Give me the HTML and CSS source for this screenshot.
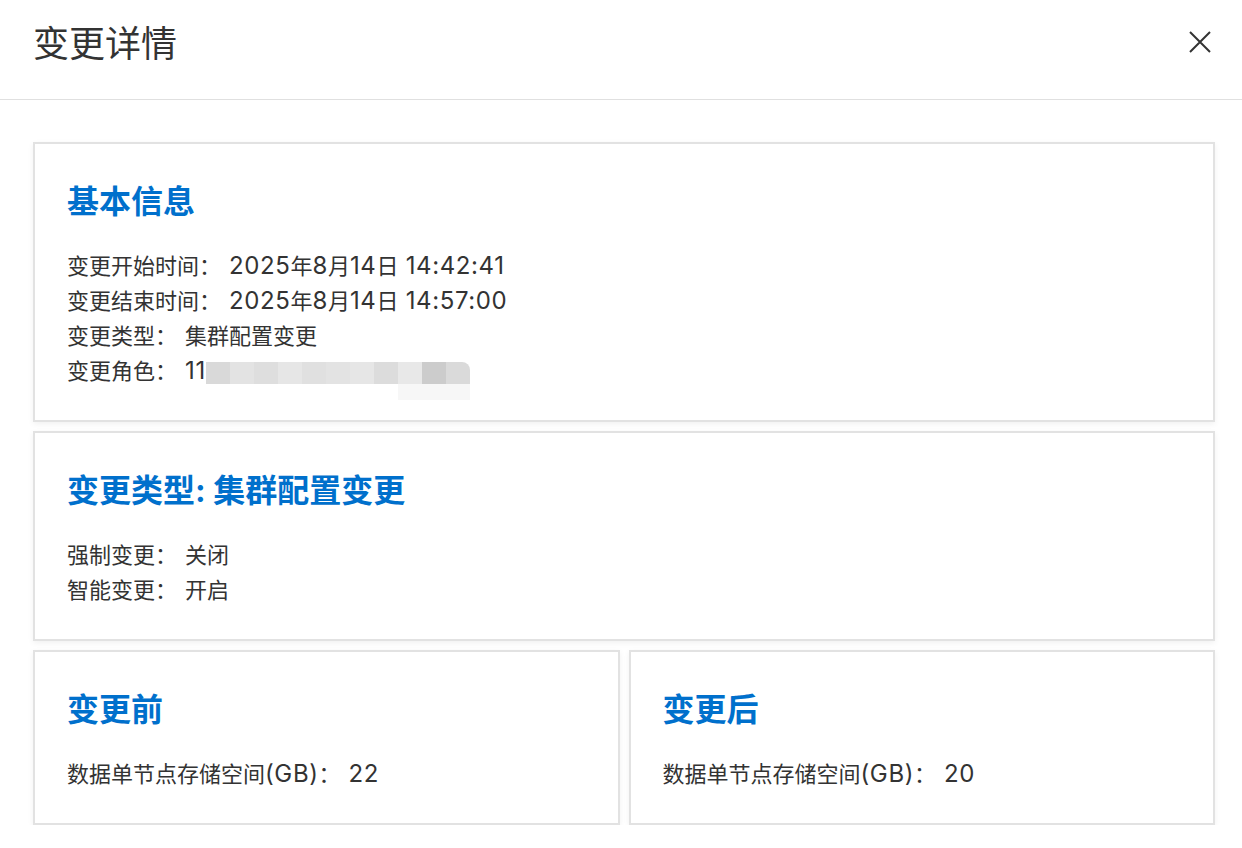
FILE: index.html
```html
<!DOCTYPE html>
<html lang="zh-CN">

<head>
    <meta charset="UTF-8">
    <meta name="viewport" content="width=device-width, initial-scale=1.0">
    <title>变更详情</title>
    <link rel="stylesheet" href="styles.css">
</head>

<body>
    <div class="drawer">
        <div class="drawer-header">
            <h1 class="drawer-title">变更详情</h1>
            <button class="close-btn" type="button" aria-label="关闭">
                <svg width="22" height="22" viewBox="0 0 22 22">
                    <path d="M1 1 L21 21 M21 1 L1 21" stroke="#333" stroke-width="2" fill="none" />
                </svg>
            </button>
        </div>

        <div class="drawer-body">
            <div class="card">
                <h2>基本信息</h2>
                <div class="info">
                    <p>变更开始时间：<span class="val"><span class="num">2025</span>年<span class="num">8</span>月<span class="num">14</span>日<span class="num"> 14:42:41</span></span></p>
                    <p>变更结束时间：<span class="val"><span class="num">2025</span>年<span class="num">8</span>月<span class="num">14</span>日<span class="num"> 14:57:00</span></span></p>
                    <p>变更类型：<span class="val">集群配置变更</span></p>
                    <p>变更角色：<span class="val num">11</span><span class="masked">
                            <i style="background:#d9d9d9"></i><i style="background:#e3e3e3"></i><i style="background:#dedede"></i><i style="background:#e6e6e6"></i><i style="background:#e0e0e0"></i><i style="background:#e3e3e3"></i><i style="background:#e6e6e6"></i><i style="background:#dcdcdc"></i><i style="background:#e8e8e8"></i><i style="background:#cccccc"></i><i style="background:#dadada"></i>
                        </span></p>
                </div>
            </div>

            <div class="card">
                <h2>变更类型: 集群配置变更</h2>
                <div class="info">
                    <p>强制变更：<span class="val">关闭</span></p>
                    <p>智能变更：<span class="val">开启</span></p>
                </div>
            </div>

            <div class="compare">
                <div class="card">
                    <h2>变更前</h2>
                    <div class="info">
                        <p>数据单节点存储空间<span class="num">(GB)</span>：<span class="val num">22</span></p>
                    </div>
                </div>
                <div class="card">
                    <h2>变更后</h2>
                    <div class="info">
                        <p>数据单节点存储空间<span class="num">(GB)</span>：<span class="val num">20</span></p>
                    </div>
                </div>
            </div>
        </div>
    </div>
</body>

</html>
```

FILE: styles.css
```css
body {
    margin: 0;
    background-color: #ffffff;
    font-family: "Inter", "Noto Sans CJK SC", sans-serif;
    color: #333333;
}

.drawer-header {
    display: flex;
    justify-content: space-between;
    align-items: flex-start;
    height: 100px;
    box-sizing: border-box;
    padding: 23px 31px 0 33px;
    border-bottom: 1px solid #e0e0e0;
}

.drawer-title {
    margin: 0;
    font-size: 36px;
    line-height: 42px;
    font-weight: normal;
    color: #333333;
}

.close-btn {
    margin-top: 8px;
    padding: 0;
    border: none;
    background: none;
    cursor: pointer;
    line-height: 0;
}

.drawer-body {
    display: flex;
    flex-direction: column;
    gap: 9px;
    padding: 42px 27px 0 33px;
}

.card {
    background-color: #ffffff;
    border: 2px solid #e2e2e2;
    box-shadow: 0 2px 6px rgba(0, 0, 0, 0.06);
    padding: 34px 32px 31px;
}

.card h2 {
    margin: 0 0 23px;
    font-size: 32px;
    line-height: 48px;
    font-weight: bold;
    color: #0070cc;
}

.info p {
    margin: 0;
    font-size: 22px;
    line-height: 35px;
    color: #333333;
}

/* 冒号后留一点空 */
.val {
    margin-left: 8px;
}

/* 数字比中文略大一点 */
.num {
    font-size: 24px;
    line-height: 0;
    letter-spacing: 0.6px;
}

.masked {
    position: relative;
    display: inline-flex;
    vertical-align: -5px;
    height: 22px;
}

.masked i {
    display: inline-block;
    width: 24px;
    height: 22px;
}

.masked i:last-child {
    border-top-right-radius: 8px;
}

.masked::after {
    content: "";
    position: absolute;
    right: 0;
    top: 22px;
    width: 72px;
    height: 16px;
    background-color: #f7f7f7;
}

.compare {
    display: grid;
    grid-template-columns: 1fr 1fr;
    gap: 9px;
}
```
